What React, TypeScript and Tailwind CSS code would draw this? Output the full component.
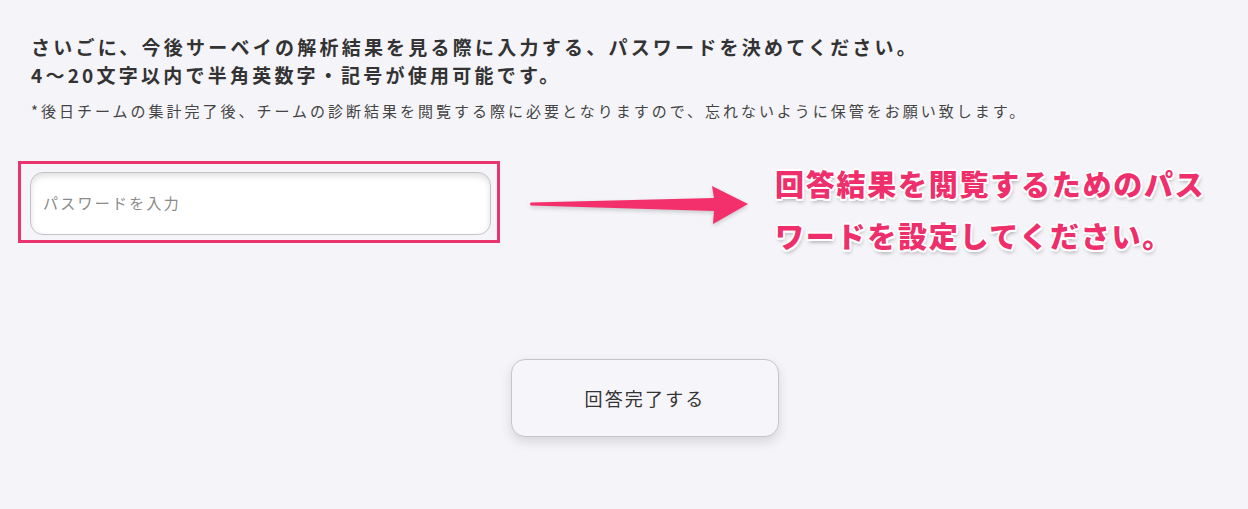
const jp = "font-['Noto_Sans_CJK_JP','Noto_Sans',sans-serif]";

function Arrow() {
	return (
		<svg width="224" height="46" viewBox="0 0 224 46" className="shrink-0 drop-shadow-[0_2px_2px_rgba(0,0,0,0.18)]">
			<path d="M3 18.5 L186 14 L184 2 L220 20 L185 40 L186 27 L3 21.5 Q1 20 3 18.5 Z" fill="#f3306b" />
		</svg>
	);
}

export default function App() {
	const outline =
		"[text-shadow:2px_0_0_#fff,-2px_0_0_#fff,0_2px_0_#fff,0_-2px_0_#fff,1.5px_1.5px_0_#fff,-1.5px_1.5px_0_#fff,1.5px_-1.5px_0_#fff,-1.5px_-1.5px_0_#fff,1px_3px_4px_rgba(0,0,0,0.35)]";
	return (
		<div className={`min-h-[509px] w-[1248px] bg-[#f5f4f9] ${jp}`}>
			<div className="pl-[31px] pt-[33px]">
				<p className="text-[19px] font-bold leading-[28px] tracking-[0.17em] text-[#333]">
					さいごに、今後サーベイの解析結果を見る際に入力する、パスワードを決めてください。
					<br />
					4～20文字以内で半角英数字・記号が使用可能です。
				</p>
				<p className="mt-[12px] text-[15px] leading-[20px] tracking-[0.2em] text-[#444]">
					*後日チームの集計完了後、チームの診断結果を閲覧する際に必要となりますので、忘れないように保管をお願い致します。
				</p>
			</div>

			<div className="mt-[40px] flex items-start">
				<div className="ml-[18px] h-[82px] w-[482px] border-[3px] border-[#ea346e] pb-[5px] pl-[9px] pr-[6px] pt-[8px]">
					<div className="flex h-[63px] items-center rounded-[13px] border border-[#c4c4c8] bg-white px-[12px] shadow-[inset_0_3px_6px_rgba(0,0,0,0.13)]">
						<span className="text-[15px] tracking-[0.15em] text-[#8a8a8a]">パスワードを入力</span>
					</div>
				</div>
				<div className="ml-[28px] mt-[23px]">
					<Arrow />
				</div>
				<div
					className={`ml-[23px] mt-[-4px] text-[29px] font-black leading-[52px] tracking-[0.06em] text-[#ee2f6b] ${outline}`}
				>
					回答結果を閲覧するためのパス
					<br />
					ワードを設定してください。
				</div>
			</div>

			<div className="mt-[98px] flex justify-center pl-[42px]">
				<button className="flex h-[78px] w-[268px] items-center justify-center rounded-[14px] border border-[#c6c6ca] bg-[#f6f5fa] text-[18px] tracking-[0.12em] text-[#333] shadow-[0_5px_12px_rgba(0,0,0,0.12)]">
					回答完了する
				</button>
			</div>
		</div>
	);
}
